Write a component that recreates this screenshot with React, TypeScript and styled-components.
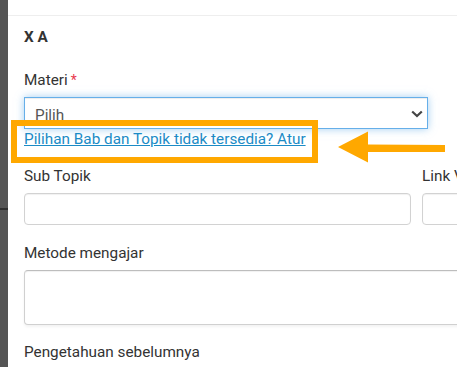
import React from "react";
import styled, { createGlobalStyle } from "styled-components";

const GlobalStyle = createGlobalStyle`
  html, body {
    margin: 0;
    padding: 0;
    width: 457px;
    height: 367px;
    overflow: hidden;
    background: #ffffff;
    font-family: Roboto, "Liberation Sans", Arial, sans-serif;
  }
  * { box-sizing: border-box; }
`;

const Page = styled.div`
  position: relative;
  display: flex;
  width: 457px;
  height: 367px;
  overflow: hidden;
`;

const Strip = styled.div`
  flex: 0 0 8px;
  background: #555555;
  display: flex;
  flex-direction: column;
`;

const StripTop = styled.div`
  flex: 0 0 auto;
  height: 210px;
  border-bottom: 2px solid #2f2f2f;
`;

const Panel = styled.div`
  flex: 1 0 auto;
  display: flex;
  flex-direction: column;
  background: #ffffff;
`;

const TopBar = styled.div`
  flex: 0 0 auto;
  height: 16px;
  border-bottom: 1px solid #eeeeee;
`;

const Body = styled.div`
  flex: 0 0 auto;
  padding: 12px 0 0 16px;
  display: flex;
  flex-direction: column;
  color: #333333;
  font-size: 15.3px;
  line-height: 18px;
`;

const Title = styled.div`
  font-weight: 700;
  margin-bottom: 25px;
`;

const Group = styled.div<{ $gap?: number }>`
  flex: 0 0 auto;
  display: flex;
  flex-direction: column;
  margin-bottom: ${(p) => p.$gap ?? 19}px;
`;

const Label = styled.label`
  display: block;
  margin-bottom: 8px;
  white-space: nowrap;
`;

const Req = styled.span`
  color: #e8384f;
  margin-left: 3px;
  font-size: 14px;
`;

const SelectBox = styled.div`
  flex: 0 0 auto;
  width: 404px;
  height: 32px;
  border: 1px solid #66afe9;
  box-shadow: inset 0 1px 1px rgba(0, 0, 0, 0.075),
    0 0 8px rgba(102, 175, 233, 0.6);
  display: flex;
  align-items: center;
  justify-content: space-between;
  padding: 3px 4px 0 10px;
  color: #555555;
  background: #ffffff;
`;

const Chevron = styled.svg`
  width: 12px;
  height: 8px;
  margin-top: -2px;
`;

const HelpLink = styled.a`
  margin-top: 1px;
  color: #1b8bc6;
  text-decoration: underline;
  white-space: nowrap;
`;

const Row = styled.div`
  flex: 0 0 auto;
  display: grid;
  grid-template-columns: 387px 387px;
  column-gap: 11px;
`;

const Input = styled.div`
  height: 32px;
  border: 1px solid #d2d2d2;
  border-radius: 4px;
  box-shadow: inset 0 1px 1px rgba(0, 0, 0, 0.06);
  background: #ffffff;
`;

const TextArea = styled.div`
  flex: 0 0 auto;
  width: 785px;
  height: 55px;
  border: 1px solid #d0d0d0;
  border-top-color: #bdbdbd;
  border-radius: 4px;
  box-shadow: inset 0 1px 1px rgba(0, 0, 0, 0.06), 0 2px 3px rgba(0, 0, 0, 0.05);
  background: #ffffff;
`;

const Highlight = styled.div`
  position: absolute;
  left: 11px;
  top: 120px;
  width: 307px;
  height: 43px;
  border: 6px solid #ffa800;
  pointer-events: none;
`;

const Arrow = styled.svg`
  position: absolute;
  left: 336px;
  top: 130px;
  width: 112px;
  height: 34px;
  pointer-events: none;
`;

export default function App() {
  return (
    <>
      <GlobalStyle />
      <Page>
        <Strip>
          <StripTop />
        </Strip>
        <Panel>
          <TopBar />
          <Body>
            <Title>X A</Title>
            <Group $gap={19}>
              <Label>
                Materi<Req>*</Req>
              </Label>
              <SelectBox>
                <span>Pilih</span>
                <Chevron viewBox="0 0 12 8">
                  <path
                    d="M1.2 1.5 L6 6 L10.8 1.5"
                    fill="none"
                    stroke="#444"
                    strokeWidth="2.2"
                  />
                </Chevron>
              </SelectBox>
              <HelpLink href="#">Pilihan Bab dan Topik tidak tersedia? Atur</HelpLink>
            </Group>
            <Row>
              <Group $gap={19}>
                <Label>Sub Topik</Label>
                <Input />
              </Group>
              <Group $gap={19}>
                <Label>Link Video</Label>
                <Input />
              </Group>
            </Row>
            <Group $gap={18}>
              <Label>Metode mengajar</Label>
              <TextArea />
            </Group>
            <Group>
              <Label>Pengetahuan sebelumnya</Label>
            </Group>
          </Body>
        </Panel>
        <Highlight />
        <Arrow viewBox="0 0 112 34">
          <polygon
            points="2,17 32,1.5 32,14.5 109,15 109,22 32,22 32,32.5"
            fill="#ffa800"
          />
        </Arrow>
      </Page>
    </>
  );
}
